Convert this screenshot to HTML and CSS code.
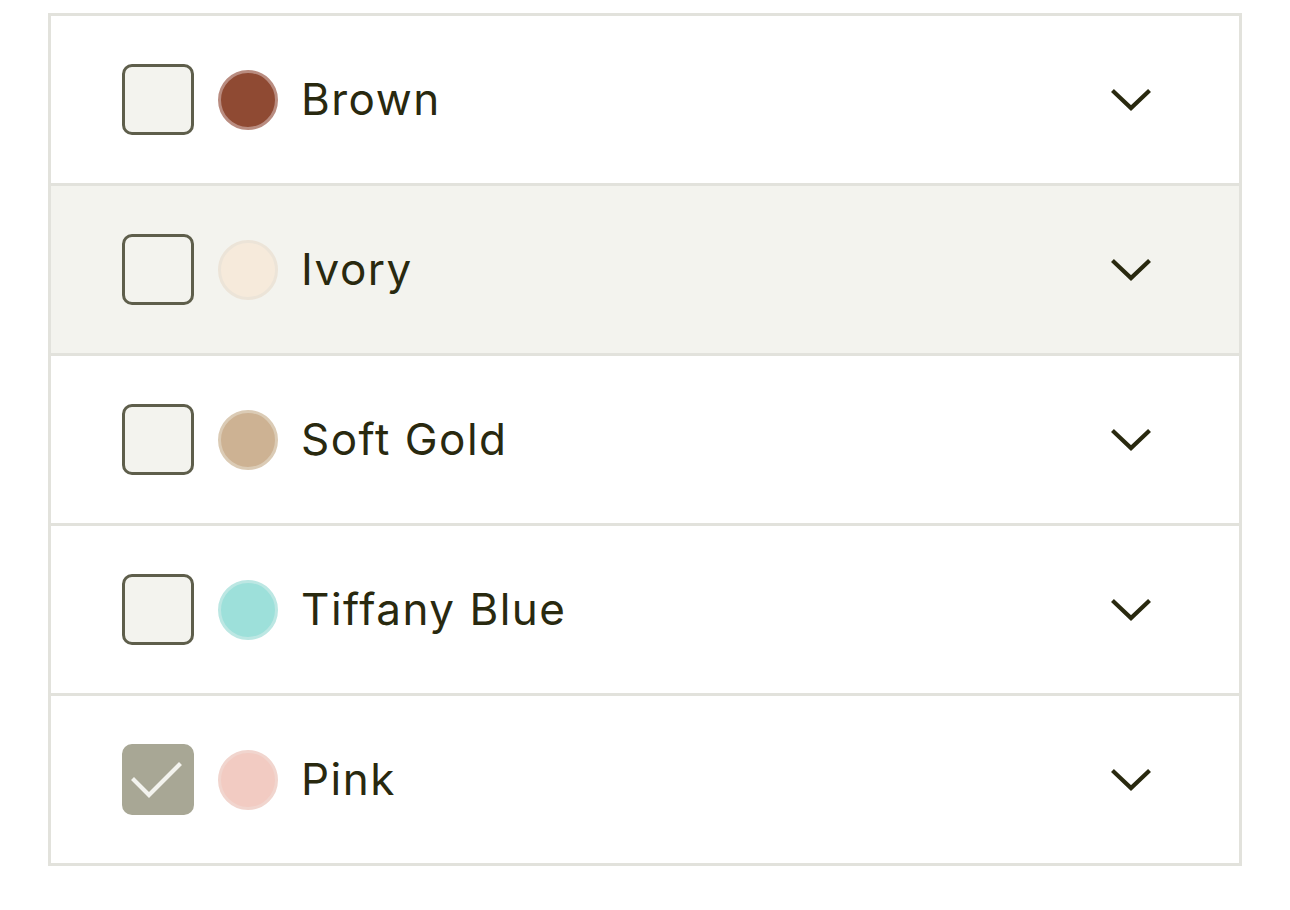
FILE: index.html
```html
<!DOCTYPE html>
<html lang="en">
<head>
<meta charset="utf-8">
<title>Colour filter</title>
<link rel="stylesheet" href="styles.css">
</head>
<body>
<ul class="filter-list">
  <li class="filter-row">
    <span class="check"></span>
    <span class="swatch swatch-brown"></span>
    <span class="label">Brown</span>
    <svg class="chevron" viewBox="0 0 40 24" aria-hidden="true"><path d="M3 4 L20 20 L37 4"/></svg>
  </li>
  <li class="filter-row is-hover">
    <span class="check"></span>
    <span class="swatch swatch-ivory"></span>
    <span class="label">Ivory</span>
    <svg class="chevron" viewBox="0 0 40 24" aria-hidden="true"><path d="M3 4 L20 20 L37 4"/></svg>
  </li>
  <li class="filter-row">
    <span class="check"></span>
    <span class="swatch swatch-gold"></span>
    <span class="label">Soft Gold</span>
    <svg class="chevron" viewBox="0 0 40 24" aria-hidden="true"><path d="M3 4 L20 20 L37 4"/></svg>
  </li>
  <li class="filter-row">
    <span class="check"></span>
    <span class="swatch swatch-tiffany"></span>
    <span class="label">Tiffany Blue</span>
    <svg class="chevron" viewBox="0 0 40 24" aria-hidden="true"><path d="M3 4 L20 20 L37 4"/></svg>
  </li>
  <li class="filter-row">
    <span class="check is-checked">
      <svg viewBox="0 0 72 72" aria-hidden="true"><path d="M12 36 L27 51 L57 21"/></svg>
    </span>
    <span class="swatch swatch-pink"></span>
    <span class="label">Pink</span>
    <svg class="chevron" viewBox="0 0 40 24" aria-hidden="true"><path d="M3 4 L20 20 L37 4"/></svg>
  </li>
</ul>
</body>
</html>
```

FILE: styles.css
```css
html, body {
  margin: 0;
  padding: 0;
  background: #ffffff;
}

body {
  padding: 13px 48px 0 48px;
  font-family: Inter, "Liberation Sans", sans-serif;
  color: #29290f;
}

.filter-list {
  list-style: none;
  margin: 0;
  padding: 0;
  width: 1188px;
  border: 3px solid #e2e2dc;
  border-bottom: 0;
}

.filter-row {
  display: flex;
  align-items: center;
  height: 167px;
  padding: 0 88px 0 71px;
  border-bottom: 3px solid #e2e2dc;
  background: #ffffff;
}

.filter-row.is-hover {
  background: #f3f3ee;
}

.check {
  flex: none;
  box-sizing: border-box;
  width: 72px;
  height: 71px;
  border: 3px solid #5e5e4b;
  border-radius: 10px;
  background: #f3f3ee;
  display: flex;
}

.check.is-checked {
  border-color: #a8a795;
  background: #a8a795;
}

.check svg {
  width: 72px;
  height: 72px;
  margin: -3px;
}

.check svg path {
  fill: none;
  stroke: #f3f3ee;
  stroke-width: 4.2;
  stroke-linecap: square;
}

.swatch {
  flex: none;
  box-sizing: border-box;
  width: 60px;
  height: 60px;
  margin-left: 24px;
  border-radius: 50%;
  border: 3px solid;
}

.swatch-brown   { background: #8f4a33; border-color: #b98c80; }
.swatch-ivory   { background: #f6eadb; border-color: #ece4d8; }
.swatch-gold    { background: #cdb293; border-color: #dbcbb5; }
.swatch-tiffany { background: #9de0da; border-color: #bce7e3; }
.swatch-pink    { background: #f2cbc2; border-color: #f1d5ce; }

.label {
  flex: 1;
  margin-left: 23px;
  font-size: 44px;
  line-height: 1;
  letter-spacing: 1.5px;
  padding-bottom: 2px;
}

.chevron {
  flex: none;
  width: 40px;
  height: 24px;
}

.chevron path {
  fill: none;
  stroke: #29290f;
  stroke-width: 4.2;
  stroke-linecap: square;
}
```
